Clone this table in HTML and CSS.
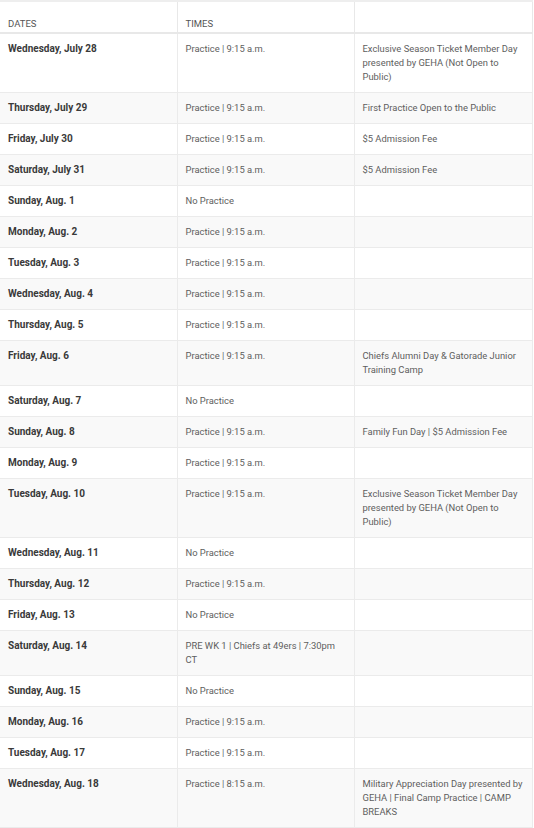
FILE: index.html
```html
<!DOCTYPE html>
<html lang="en">
<head>
<meta charset="utf-8">
<title>Training Camp Schedule</title>
<link rel="stylesheet" href="styles.css">
</head>
<body>
<table class="schedule">
  <colgroup>
    <col class="c1"><col class="c2"><col class="c3">
  </colgroup>
  <thead>
    <tr><th>Dates</th><th>Times</th><th></th></tr>
  </thead>
  <tbody>
    <tr><td class="d">Wednesday, July 28</td><td>Practice | 9:15 a.m.</td><td>Exclusive Season Ticket Member Day presented by GEHA (Not Open to Public)</td></tr>
    <tr><td class="d">Thursday, July 29</td><td>Practice | 9:15 a.m.</td><td>First Practice Open to the Public</td></tr>
    <tr><td class="d">Friday, July 30</td><td>Practice | 9:15 a.m.</td><td>$5 Admission Fee</td></tr>
    <tr><td class="d">Saturday, July 31</td><td>Practice | 9:15 a.m.</td><td>$5 Admission Fee</td></tr>
    <tr><td class="d">Sunday, Aug. 1</td><td>No Practice</td><td></td></tr>
    <tr><td class="d">Monday, Aug. 2</td><td>Practice | 9:15 a.m.</td><td></td></tr>
    <tr><td class="d">Tuesday, Aug. 3</td><td>Practice | 9:15 a.m.</td><td></td></tr>
    <tr><td class="d">Wednesday, Aug. 4</td><td>Practice | 9:15 a.m.</td><td></td></tr>
    <tr><td class="d">Thursday, Aug. 5</td><td>Practice | 9:15 a.m.</td><td></td></tr>
    <tr><td class="d">Friday, Aug. 6</td><td>Practice | 9:15 a.m.</td><td>Chiefs Alumni Day &amp; Gatorade Junior Training Camp</td></tr>
    <tr><td class="d">Saturday, Aug. 7</td><td>No Practice</td><td></td></tr>
    <tr><td class="d">Sunday, Aug. 8</td><td>Practice | 9:15 a.m.</td><td>Family Fun Day | $5 Admission Fee</td></tr>
    <tr><td class="d">Monday, Aug. 9</td><td>Practice | 9:15 a.m.</td><td></td></tr>
    <tr><td class="d">Tuesday, Aug. 10</td><td>Practice | 9:15 a.m.</td><td>Exclusive Season Ticket Member Day presented by GEHA (Not Open to Public)</td></tr>
    <tr><td class="d">Wednesday, Aug. 11</td><td>No Practice</td><td></td></tr>
    <tr><td class="d">Thursday, Aug. 12</td><td>Practice | 9:15 a.m.</td><td></td></tr>
    <tr><td class="d">Friday, Aug. 13</td><td>No Practice</td><td></td></tr>
    <tr><td class="d">Saturday, Aug. 14</td><td>PRE WK 1 | Chiefs at 49ers | 7:30pm CT</td><td></td></tr>
    <tr><td class="d">Sunday, Aug. 15</td><td>No Practice</td><td></td></tr>
    <tr><td class="d">Monday, Aug. 16</td><td>Practice | 9:15 a.m.</td><td></td></tr>
    <tr><td class="d">Tuesday, Aug. 17</td><td>Practice | 9:15 a.m.</td><td></td></tr>
    <tr><td class="d">Wednesday, Aug. 18</td><td>Practice | 8:15 a.m.</td><td>Military Appreciation Day presented by GEHA | Final Camp Practice | CAMP BREAKS</td></tr>
  </tbody>
</table>
</body>
</html>
```

FILE: styles.css
```css
html, body {
  margin: 0;
  padding: 0;
  background: #ffffff;
}

body {
  font-family: Roboto, "Liberation Sans", Arial, sans-serif;
  color: #555555;
}

.schedule {
  width: 532px;
  border-collapse: collapse;
  table-layout: fixed;
  border-top: 2px solid #eeeeee;
  border-right: 1px solid #e8e8e8;
}

.c1 { width: 177px; }
.c2 { width: 177px; }
.c3 { width: 178px; }

.schedule th {
  height: 32px;
  box-sizing: border-box;
  padding: 0 8px 2px;
  text-align: left;
  vertical-align: bottom;
  font-weight: 400;
  font-size: 9.5px;
  line-height: 12px;
  text-transform: uppercase;
  color: #555555;
  border-bottom: 2px solid #e8e8e8;
  border-right: 1px solid #e8e8e8;
}

.schedule td {
  padding: 8px 5px 8px 8px;
  vertical-align: top;
  font-size: 9.4px;
  line-height: 14px;
  color: #5e5e5e;
  border-bottom: 1px solid #ebebeb;
  border-right: 1px solid #ebebeb;
}

.schedule td.d {
  font-weight: 700;
  font-size: 10px;
  color: #3a3a3a;
}

.schedule tbody tr:nth-child(even) td {
  background: #f9f9f9;
}
```
